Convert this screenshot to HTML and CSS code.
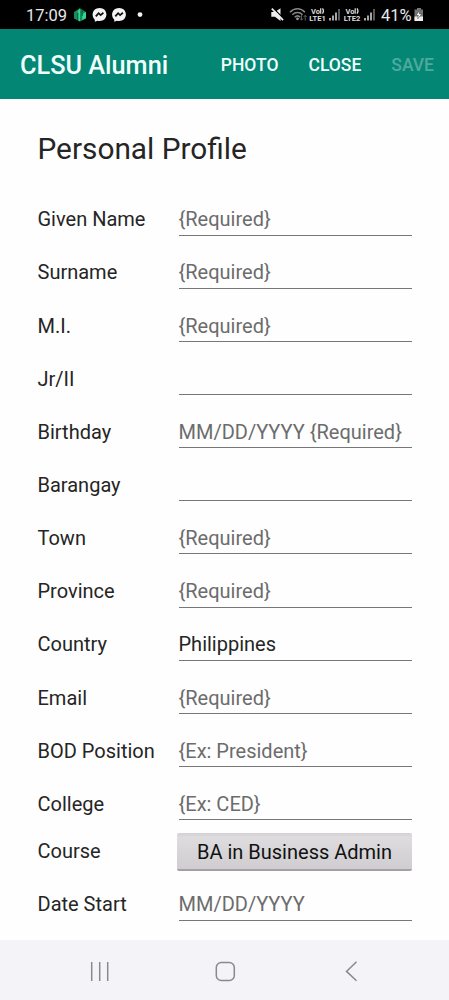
FILE: index.html
```html
<!DOCTYPE html>
<html lang="en">
<head>
<meta charset="utf-8">
<title>CLSU Alumni</title>
<link rel="stylesheet" href="styles.css">
</head>
<body>
<div class="status">
  <span class="clock">17:09</span>
  <svg class="status-left" width="76" height="29" viewBox="0 0 76 29">
    <path d="M6 8.200 12 12v6.500L6 21.500 0 18.500V12z" fill="#168c5c"/>
    <path d="M6 8.200v13.300L3.800 20v-9zM8.200 14v6L12 18v-6z" fill="#35d492"/>
    <path d="M3.800 13v7M8.200 10v6" stroke="#075438" stroke-width="1"/>
    <g id="chat">
      <path d="M25.600 8c4 0 6.800 2.800 6.800 6.500S29.600 21 25.600 21c-.8 0-1.500-.1-2.200-.3l-2.500 1.100-.2-2.300c-1.400-1.300-2.100-3-2.100-5C18.600 10.800 21.600 8 25.600 8z" fill="#f3f3f5"/>
      <path d="m21.800 16.400 2.800-3.200 2 1.900 2.800-2.300" fill="none" stroke="#111" stroke-width="1.800"/>
    </g>
    <use href="#chat" x="19.500"/>
    <circle cx="66" cy="14.600" r="2.400" fill="#f3f3f5"/>
  </svg>
  <svg class="status-right" width="110" height="29" viewBox="270 0 110 29">
    <path d="M271.300 12h3.700l5.500-3.800v12.800l-5.500-4.200h-3.700z" fill="#eee"/>
    <path d="m272.500 7.500 11.500 11.500" stroke="#000" stroke-width="1.300"/>
    <path d="m271.800 8.700 11.300 11.400" stroke="#eee" stroke-width="1.700"/>
    <g fill="none" stroke="#858585" stroke-width="1.500">
      <path d="M290 12.200c4.200-4.500 10.700-4.500 14.900 0"/>
      <path d="M292.300 14.700c3-3 7.300-3 10.300 0"/>
      <path d="M294.700 17.200c1.700-1.600 3.900-1.600 5.600 0"/>
    </g>
    <circle cx="297.500" cy="18.800" r="1.400" fill="#999"/>
    <path d="M301.500 15v5m-1.500-1.500 1.500 1.700 1.500-1.700M305.200 20.500v-5m-1.500 1.500 1.500-1.700 1.500 1.700" fill="none" stroke="#666" stroke-width=".9"/>
    <g class="network">
      <text x="311" y="13.700" textLength="9" lengthAdjust="spacingAndGlyphs">Vo</text>
      <path d="M320.700 8.300v5.400M322.500 8.300q2 2.700 0 5.400" fill="none" stroke="#ddd" stroke-width="1.200"/>
      <text x="309.300" y="21" textLength="16.500" lengthAdjust="spacingAndGlyphs">LTE1</text>
      <text x="345.500" y="13.700" textLength="9" lengthAdjust="spacingAndGlyphs">Vo</text>
      <path d="M355.200 8.300v5.400M357 8.300q2 2.700 0 5.400" fill="none" stroke="#ddd" stroke-width="1.200"/>
      <text x="343.800" y="21" textLength="16.500" lengthAdjust="spacingAndGlyphs">LTE2</text>
    </g>
    <g stroke-width="1.500" stroke="#ddd">
      <path d="M330 18v2.500M333 15.500v5M336 12.500v8M365 18v2.500M368 15.500v5M371 12.500v8"/>
      <path d="M339 9v11.500M374 9v11.500" stroke="#777"/>
    </g>
  </svg>
  <span class="percent">41%</span>
  <svg class="battery" width="10" height="29" viewBox="0 0 10 29">
    <path d="M3 8h4v1.600h2V21H.5V9.600H3z" fill="#777"/>
    <path d="M.5 16.500H9V21H.5z" fill="#eee"/>
    <path d="m5.900 10.500-4 4.700h2.400l-.6 3.600 4.200-4.900H5.300z" fill="#fff" stroke="#333" stroke-width=".5"/>
  </svg>
</div>
<header class="appbar">
  <h1 class="brand">CLSU Alumni</h1>
  <nav class="actions"><span class="photo">PHOTO</span><span class="close">CLOSE</span><span class="save">SAVE</span></nav>
</header>
<main class="content">
  <h2 class="title">Personal Profile</h2>
  <div class="form">
    <div class="row"><label>Given Name</label><div class="field">{Required}</div></div>
    <div class="row"><label>Surname</label><div class="field">{Required}</div></div>
    <div class="row"><label>M.I.</label><div class="field">{Required}</div></div>
    <div class="row"><label>Jr/II</label><div class="field"></div></div>
    <div class="row"><label>Birthday</label><div class="field">MM/DD/YYYY {Required}</div></div>
    <div class="row"><label>Barangay</label><div class="field"></div></div>
    <div class="row"><label>Town</label><div class="field">{Required}</div></div>
    <div class="row"><label>Province</label><div class="field">{Required}</div></div>
    <div class="row"><label>Country</label><div class="field filled">Philippines</div></div>
    <div class="row"><label>Email</label><div class="field">{Required}</div></div>
    <div class="row"><label>BOD Position</label><div class="field">{Ex: President}</div></div>
    <div class="row"><label>College</label><div class="field">{Ex: CED}</div></div>
    <div class="row course"><label>Course</label><button class="picker">BA in Business Admin</button></div>
    <div class="row"><label>Date Start</label><div class="field">MM/DD/YYYY</div></div>
  </div>
</main>
<footer class="navbar">
  <svg width="449" height="60" viewBox="0 0 449 60" fill="none" stroke="#8b898d" stroke-width="1.500">
    <path d="M91.700 22v19M99.700 22v19M107.700 22v19"/>
    <rect x="216.300" y="22.500" width="18" height="18" rx="5"/>
    <path d="m356.500 21.800-10 9.600 10 9.400"/>
  </svg>
</footer>
</body>
</html>
```
FILE: styles.css
```css
* { box-sizing: border-box; }
body {
  margin: 0;
  width: 449px;
  height: 1000px;
  overflow: hidden;
  display: flex;
  flex-direction: column;
  background: #fefefe;
  color: #252525;
  font-family: Roboto, "Liberation Sans", sans-serif;
}
svg { display: block; flex: none; }
.status {
  height: 29px;
  flex: none;
  display: flex;
  background: #000;
  color: #e8e8e8;
  line-height: 31px;
  font-size: 16.500px;
}
.clock { width: 74px; padding-left: 26px; }
.status-right { margin-left: 120px; }
.network { fill: #ddd; font-size: 8px; font-weight: 700; }
.percent { width: 33px; margin-left: 1px; }
.appbar {
  height: 70px;
  flex: none;
  display: flex;
  align-items: center;
  padding: 2px 15px 0 20px;
  background: #048675;
  color: #f0fffc;
}
.brand { margin: 0; font-size: 25.300px; font-weight: 500; white-space: nowrap; }
.actions {
  margin-left: auto;
  display: flex;
  gap: 30px;
  font-size: 17.500px;
  font-weight: 500;
}
.save { color: #4eaa9e; }
.content { flex: 1; min-height: 0; padding: 30px 37px 0 37.500px; }
.title { margin: 0; height: 53.500px; line-height: 40px; font-size: 29.800px; font-weight: 400; }
.row {
  display: grid;
  grid-template-columns: 141px 233.500px;
  align-items: end;
  height: 53.150px;
  font-size: 20px;
  line-height: 30.400px;
  white-space: nowrap;
}
label { padding-bottom: 1px; }
.field { height: 31.400px; border-bottom: 1px solid #777; color: #6c6c6c; }
.filled { color: #252525; }
.row.course { height: 47.500px; }
.picker {
  height: 38px;
  margin: 0 0 -3px -1.500px;
  padding: 2px 0 0;
  border: 0;
  border-bottom: 2px solid #a3a1a4;
  border-radius: 2px;
  background: linear-gradient(#d2d0d3, #dedcdf 12%, #cfcdd0);
  color: #111;
  font: 20px Roboto, "Liberation Sans", sans-serif;
}
.navbar { height: 60px; flex: none; background: #f4f3f7; }
```
